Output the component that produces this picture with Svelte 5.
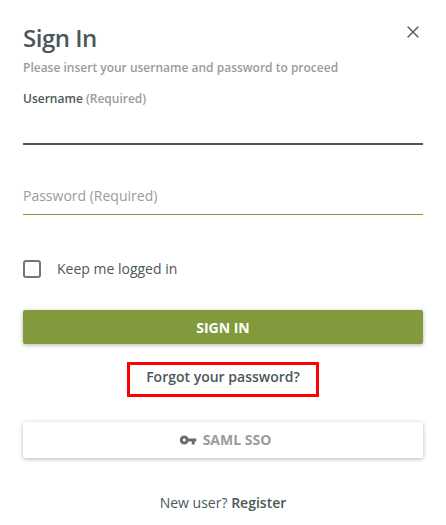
<script>
  let username = $state('');
  let password = $state('');
  let keep = $state(false);
</script>

<main>
  <header>
    <div>
      <h1>Sign In</h1>
      <p class="hint">Please insert your username and password to proceed</p>
    </div>
    <button type="button" class="close" aria-label="Close">
      <svg viewBox="0 0 20 20" width="20" height="20" aria-hidden="true">
        <path d="M4.6 4.6 15.4 15.4M15.4 4.6 4.6 15.4" stroke="currentColor" stroke-width="1.5" fill="none" />
      </svg>
    </button>
  </header>

  <form onsubmit={(e) => e.preventDefault()}>
    <div class="field active">
      <label for="username">Username <span>(Required)</span></label>
      <input id="username" type="text" bind:value={username} />
    </div>

    <div class="field resting">
      <label for="password" class:filled={password}>Password (Required)</label>
      <input id="password" type="password" bind:value={password} />
    </div>

    <label class="keep">
      <input type="checkbox" bind:checked={keep} />
      Keep me logged in
    </label>

    <button type="submit" class="action primary">SIGN IN</button>
  </form>

  <div class="forgot"><a href="#forgot">Forgot your password?</a></div>

  <button type="button" class="action sso">
    <svg viewBox="0 0 24 24" width="18" height="18" aria-hidden="true">
      <path fill="currentColor" d="M12.65 10C11.83 7.67 9.61 6 7 6c-3.31 0-6 2.69-6 6s2.69 6 6 6c2.61 0 4.83-1.67 5.65-4H17v4h4v-4h2v-4H12.65zM7 14c-1.1 0-2-.9-2-2s.9-2 2-2 2 .9 2 2-.9 2-2 2z" />
    </svg>
    SAML SSO
  </button>

  <p class="register">New user? <a href="#register">Register</a></p>
</main>

<style>
  :global(body) {
    margin: 0;
    background: #fff;
  }
  main {
    box-sizing: border-box;
    display: flex;
    flex-direction: column;
    padding: 22px 23px 12px;
    font: 14px/20px "Open Sans", sans-serif;
    color: #4b585a;
  }
  header {
    display: flex;
    justify-content: space-between;
    align-items: flex-start;
  }
  h1,
  p {
    margin: 0;
  }
  h1 {
    font-size: 24px;
    line-height: 32px;
    font-weight: 600;
    letter-spacing: -0.5px;
  }
  .hint {
    margin-top: 4px;
    font-size: 12px;
    font-weight: 600;
    color: #9b9b9b;
  }
  button {
    border: 0;
    padding: 0;
    font: inherit;
    cursor: pointer;
  }
  .close {
    display: flex;
    background: none;
    color: #6b6b6b;
  }
  form {
    display: flex;
    flex-direction: column;
    padding-top: 11px;
  }
  .field {
    display: grid;
  }
  .field input {
    min-width: 0;
    width: 100%;
    box-sizing: border-box;
    height: 36px;
    padding: 0;
    border: 0;
    border-bottom: 1px solid #829a3c;
    outline: 0;
    background: none;
    font: inherit;
    color: inherit;
  }
  .active label {
    font-size: 12px;
    font-weight: 600;
  }
  .active label span {
    color: #9b9b9b;
  }
  .active input {
    border-bottom: 2px solid #4b585a;
  }
  .resting {
    margin-top: 34px;
  }
  .resting label,
  .resting input {
    grid-area: 1 / 1;
  }
  .resting label {
    padding: 7px 0 9px;
    color: #9b9b9b;
    pointer-events: none;
  }
  .resting label.filled {
    visibility: hidden;
  }
  .keep {
    display: flex;
    align-items: center;
    gap: 16px;
    margin-top: 44px;
  }
  .keep input {
    appearance: none;
    box-sizing: border-box;
    width: 18px;
    height: 18px;
    margin: 0;
    border: 2px solid #757575;
    border-radius: 3px;
  }
  .keep input:checked {
    background: #829a3c;
  }
  .action {
    display: flex;
    align-items: center;
    justify-content: center;
    gap: 6px;
    width: 100%;
    border-radius: 2px;
    box-shadow: 0 1px 4px rgba(0, 0, 0, 0.3);
    font-weight: 700;
  }
  .primary {
    height: 34px;
    margin-top: 31px;
    padding-top: 2px;
    background: #829a3c;
    color: #fff;
  }
  .forgot {
    align-self: center;
    margin: 18px 0 25px;
    padding: 2px 16px 7px;
    border: 3px solid #f00;
  }
  a {
    font-weight: 600;
    color: inherit;
    text-decoration: none;
  }
  .sso {
    height: 36px;
    padding-left: 4px;
    background: #fff;
    color: #9b9b9b;
  }
  .sso svg {
    color: #6b6b6b;
  }
  .register {
    margin-top: 35px;
    text-align: center;
  }
</style>
